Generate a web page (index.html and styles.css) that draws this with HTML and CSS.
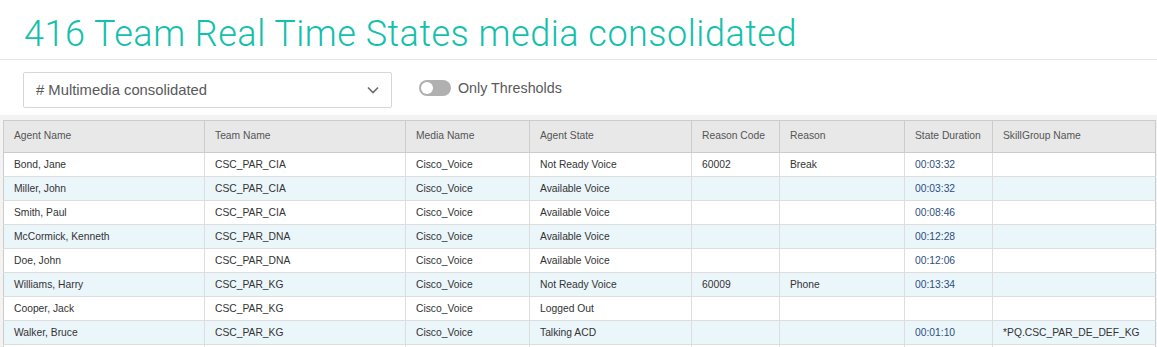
FILE: index.html
```html
<!DOCTYPE html>
<html>
<head>
<meta charset="utf-8">
<link rel="stylesheet" href="styles.css">
</head>
<body>
<header class="page-header">
  <h1 class="title">416 Team Real Time States media consolidated</h1>
</header>
<div class="filters">
  <div class="select">
    <span class="select-text"># Multimedia consolidated</span>
    <svg class="chevron" width="12" height="8" viewBox="0 0 12 8"><path d="M1 1.5 L6 6.5 L11 1.5" fill="none" stroke="#6b6b6b" stroke-width="1.6"/></svg>
  </div>
  <label class="toggle">
    <span class="switch"><span class="knob"></span></span>
    <span class="toggle-label">Only Thresholds</span>
  </label>
</div>
<main class="content">
  <table class="grid">
    <colgroup>
      <col class="c1"><col class="c2"><col class="c3"><col class="c4"><col class="c5"><col class="c6"><col class="c7"><col class="c8">
    </colgroup>
    <thead>
      <tr><th>Agent Name</th><th>Team Name</th><th>Media Name</th><th>Agent State</th><th>Reason Code</th><th>Reason</th><th>State Duration</th><th>SkillGroup Name</th></tr>
    </thead>
    <tbody>
      <tr><td>Bond, Jane</td><td>CSC_PAR_CIA</td><td>Cisco_Voice</td><td>Not Ready Voice</td><td>60002</td><td>Break</td><td class="dur">00:03:32</td><td></td></tr>
      <tr><td>Miller, John</td><td>CSC_PAR_CIA</td><td>Cisco_Voice</td><td>Available Voice</td><td></td><td></td><td class="dur">00:03:32</td><td></td></tr>
      <tr><td>Smith, Paul</td><td>CSC_PAR_CIA</td><td>Cisco_Voice</td><td>Available Voice</td><td></td><td></td><td class="dur">00:08:46</td><td></td></tr>
      <tr><td>McCormick, Kenneth</td><td>CSC_PAR_DNA</td><td>Cisco_Voice</td><td>Available Voice</td><td></td><td></td><td class="dur">00:12:28</td><td></td></tr>
      <tr><td>Doe, John</td><td>CSC_PAR_DNA</td><td>Cisco_Voice</td><td>Available Voice</td><td></td><td></td><td class="dur">00:12:06</td><td></td></tr>
      <tr><td>Williams, Harry</td><td>CSC_PAR_KG</td><td>Cisco_Voice</td><td>Not Ready Voice</td><td>60009</td><td>Phone</td><td class="dur">00:13:34</td><td></td></tr>
      <tr><td>Cooper, Jack</td><td>CSC_PAR_KG</td><td>Cisco_Voice</td><td>Logged Out</td><td></td><td></td><td></td><td></td></tr>
      <tr><td>Walker, Bruce</td><td>CSC_PAR_KG</td><td>Cisco_Voice</td><td>Talking ACD</td><td></td><td></td><td class="dur">00:01:10</td><td>*PQ.CSC_PAR_DE_DEF_KG</td></tr>
      <tr><td></td><td></td><td></td><td></td><td></td><td></td><td></td><td></td></tr>
    </tbody>
  </table>
</main>
</body>
</html>
```

FILE: styles.css
```css
html, body {
  margin: 0;
  padding: 0;
  background: #ffffff;
  font-family: "Liberation Sans", Arial, sans-serif;
  overflow: hidden;
}

.page-header {
  height: 59px;
  border-bottom: 1px solid #e6e6e6;
  padding-left: 24px;
}

.title {
  margin: 0;
  padding-top: 12px;
  font-family: Roboto, "Liberation Sans", sans-serif;
  font-weight: 300;
  font-size: 36px;
  line-height: 44px;
  letter-spacing: 0.5px;
  color: #14bfac;
  white-space: nowrap;
}

.filters {
  display: flex;
  align-items: center;
  height: 55px;
  padding-left: 23px;
  gap: 27px;
}

.select {
  box-sizing: border-box;
  width: 369px;
  height: 36px;
  margin-top: 5px;
  border: 1px solid #d6d6d6;
  border-radius: 2px;
  display: flex;
  align-items: center;
  justify-content: space-between;
  padding: 0 12px 0 12px;
}

.select-text {
  font-size: 14.8px;
  color: #58595b;
}

.chevron {
  display: block;
}

.toggle {
  display: flex;
  align-items: center;
  gap: 7px;
}

.switch {
  position: relative;
  width: 32px;
  height: 16px;
  border-radius: 8px;
  background: #b0b0b0;
}

.knob {
  position: absolute;
  left: 2px;
  top: 2px;
  width: 12px;
  height: 12px;
  border-radius: 50%;
  background: #ffffff;
}

.toggle-label {
  font-size: 14.3px;
  color: #58595b;
}

.content {
  background: #f3f3f3;
  padding: 5px 0 0 3px;
  height: 300px;
}

.grid {
  border-collapse: collapse;
  table-layout: fixed;
  width: 1152px;
  background: #ffffff;
  font-size: 10.3px;
  color: #333333;
}

.c1 { width: 201px; }
.c2 { width: 201px; }
.c3 { width: 124px; }
.c4 { width: 162px; }
.c5 { width: 88px; }
.c6 { width: 125px; }
.c7 { width: 88px; }
.c8 { width: 163px; }

.grid th {
  background: #e8e8e8;
  color: #555555;
  font-weight: normal;
  text-align: left;
  height: 28px;
  padding: 0 10px 3px 10px;
  border: 1px solid #cccccc;
  vertical-align: middle;
  white-space: nowrap;
  overflow: hidden;
}

.grid td {
  height: 23px;
  padding: 0 10px;
  border: 1px solid #dddddd;
  white-space: nowrap;
  overflow: hidden;
}

.grid td:first-child { border-left-color: #cccccc; }
.grid td:last-child { border-right-color: #cccccc; }
.grid tbody tr:first-child td { border-top-color: #cccccc; }

.grid tbody tr:nth-child(even) td {
  background: #ebf6fb;
}

.grid td.dur {
  color: #2b4f7e;
}
```
